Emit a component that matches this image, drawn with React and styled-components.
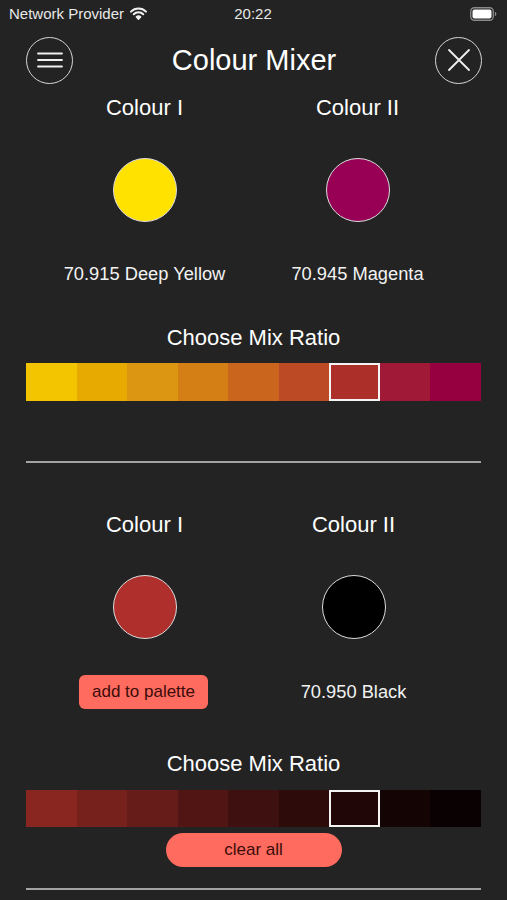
import React from 'react'
import styled, { createGlobalStyle } from 'styled-components'

const GlobalStyle = createGlobalStyle`
  html, body {
    margin: 0;
    padding: 0;
    background: #232323;
  }
  body {
    font-family: "Liberation Sans", Arial, sans-serif;
    color: #ffffff;
  }
`

const Page = styled.div`
  width: 507px;
  min-height: 900px;
  background: #232323;
  display: flex;
  flex-direction: column;
  overflow: hidden;
`

const StatusBar = styled.div`
  height: 28px;
  display: grid;
  grid-template-columns: 1fr auto 1fr;
  align-items: center;
  padding: 0 10px 0 9px;
  font-size: 15px;
  color: #e8e8e8;
`

const Carrier = styled.div`
  display: flex;
  align-items: center;
  gap: 6px;
  margin-top: -1px;
`

const Clock = styled.div`
  font-size: 15px;
  margin-top: -1px;
`

const Battery = styled.div`
  justify-self: end;
  display: flex;
  align-items: center;
`

const Header = styled.div`
  height: 64px;
  display: flex;
  align-items: center;
  justify-content: space-between;
  padding: 0 25px 0 26px;
`

const RoundButton = styled.button`
  width: 47px;
  height: 47px;
  border-radius: 50%;
  border: 1.5px solid #d6d6d6;
  background: transparent;
  display: flex;
  align-items: center;
  justify-content: center;
  padding: 0;
  &:hover {
    cursor: pointer;
  }
`

const Title = styled.h1`
  margin: 0;
  font-size: 29px;
  font-weight: 400;
  color: #ffffff;
`

const Columns = styled.div`
  display: grid;
  grid-template-columns: 213px ${p => p.$second}px;
  padding-left: 38px;
  margin-top: ${p => p.$top}px;
`

const Cell = styled.div`
  display: flex;
  justify-content: center;
  align-items: center;
  margin-top: ${p => p.$top || 0}px;
  height: ${p => p.$h}px;
`

const ColourLabel = styled.div`
  font-size: 22px;
  line-height: 32px;
`

const Swatch = styled.div`
  width: 64px;
  height: 64px;
  border-radius: 50%;
  box-sizing: border-box;
  border: 1.5px solid #dcdcdc;
  background: ${p => p.$colour};
`

const ColourName = styled.div`
  font-size: 18.3px;
  color: #f2f2f2;
`

const PaletteButton = styled.button`
  height: 34px;
  width: 129px;
  border: none;
  border-radius: 6px;
  background: #ff6b5f;
  color: #3b0c09;
  font-family: "Liberation Sans", Arial, sans-serif;
  font-size: 17px;
  padding: 0;
  margin-left: -2px;
`

const MixTitle = styled.div`
  text-align: center;
  font-size: 22px;
  line-height: 26px;
  margin-top: ${p => p.$top}px;
`

const RatioBar = styled.div`
  display: grid;
  grid-template-columns: repeat(9, 1fr);
  margin: ${p => p.$top}px 26px 0 26px;
  height: ${p => p.$h}px;
`

const RatioCell = styled.div`
  background: ${p => p.$colour};
  box-sizing: border-box;
  border: ${p => (p.$selected ? '2px solid #f4f4f4' : 'none')};
`

const Divider = styled.div`
  height: 2px;
  background: #a3a3a3;
  margin: ${p => p.$top}px 26px 0 26px;
`

const ClearButton = styled.button`
  align-self: center;
  width: 176px;
  height: 34px;
  margin-top: 6px;
  border: none;
  border-radius: 17px;
  background: #ff6b5f;
  color: #3b0c09;
  font-family: "Liberation Sans", Arial, sans-serif;
  font-size: 17px;
  padding: 0;
`

const WifiIcon = () => (
  <svg width="17" height="13" viewBox="0 0 17 13">
    <path d="M1 4.6 A10.5 10.5 0 0 1 16 4.6" stroke="#f0f0f0" strokeWidth="2" fill="none" strokeLinecap="round" />
    <path d="M3.7 7.3 A6.6 6.6 0 0 1 13.3 7.3" stroke="#f0f0f0" strokeWidth="2" fill="none" strokeLinecap="round" />
    <path d="M6.3 9.9 A3 3 0 0 1 10.7 9.9 L8.5 12.3 Z" fill="#f0f0f0" stroke="#f0f0f0" strokeWidth="1.4" strokeLinejoin="round" />
  </svg>
)

const BatteryIcon = () => (
  <svg width="27" height="14" viewBox="0 0 27 14">
    <rect x="0.75" y="0.75" width="22.5" height="12.5" rx="3.5" fill="none" stroke="#8a8a8a" strokeWidth="1.3" />
    <rect x="2.5" y="2.5" width="19" height="9" rx="2" fill="#ffffff" />
    <path d="M24.8 4.8 Q26.4 5.2 26.4 7 Q26.4 8.8 24.8 9.2 Z" fill="#8a8a8a" />
  </svg>
)

const MenuIcon = () => (
  <svg width="26" height="18" viewBox="0 0 26 18">
    <path d="M1 2.5H25M1 9H25M1 15.5H25" stroke="#f0f0f0" strokeWidth="1.8" strokeLinecap="round" />
  </svg>
)

const CloseIcon = () => (
  <svg width="24" height="24" viewBox="0 0 24 24">
    <path d="M2 2L22 22M22 2L2 22" stroke="#f0f0f0" strokeWidth="1.8" strokeLinecap="round" />
  </svg>
)

const ratiosA = ['#f2c500', '#e6aa00', '#dd9611', '#d47f15', '#c9651c', '#bc4b25', '#ad2f2a', '#a01a37', '#960041']
const ratiosB = ['#88261f', '#76211c', '#661c19', '#511614', '#3e100f', '#2d0b0a', '#200606', '#150404', '#0a0202']

function Ratio(props) {
  return (
    <RatioBar $top={props.top} $h={props.h}>
      {props.colours.map((c, i) => (
        <RatioCell key={i} $colour={c} $selected={i === props.selected} />
      ))}
    </RatioBar>
  )
}

export default function App() {
  return (
    <Page>
      <GlobalStyle />
      <StatusBar>
        <Carrier>
          Network Provider
          <WifiIcon />
        </Carrier>
        <Clock>20:22</Clock>
        <Battery>
          <BatteryIcon />
        </Battery>
      </StatusBar>

      <Header>
        <RoundButton><MenuIcon /></RoundButton>
        <Title>Colour Mixer</Title>
        <RoundButton><CloseIcon /></RoundButton>
      </Header>

      <Columns $top={0} $second={213}>
        <Cell $h={32}><ColourLabel>Colour I</ColourLabel></Cell>
        <Cell $h={32}><ColourLabel>Colour II</ColourLabel></Cell>
        <Cell $h={64} $top={34}><Swatch $colour="#ffe200" /></Cell>
        <Cell $h={64} $top={34}><Swatch $colour="#970055" /></Cell>
        <Cell $h={24} $top={40}><ColourName>70.915 Deep Yellow</ColourName></Cell>
        <Cell $h={24} $top={40}><ColourName>70.945 Magenta</ColourName></Cell>
      </Columns>
      <MixTitle $top={39}>Choose Mix Ratio</MixTitle>
      <Ratio top={12} h={38} colours={ratiosA} selected={6} />
      <Divider $top={60} />

      <Columns $top={46} $second={205}>
        <Cell $h={32}><ColourLabel>Colour I</ColourLabel></Cell>
        <Cell $h={32}><ColourLabel>Colour II</ColourLabel></Cell>
        <Cell $h={64} $top={34}><Swatch $colour="#ae2f2b" /></Cell>
        <Cell $h={64} $top={34}><Swatch $colour="#000000" /></Cell>
        <Cell $h={34} $top={36}><PaletteButton>add to palette</PaletteButton></Cell>
        <Cell $h={34} $top={36}><ColourName>70.950 Black</ColourName></Cell>
      </Columns>
      <MixTitle $top={42}>Choose Mix Ratio</MixTitle>
      <Ratio top={13} h={37} colours={ratiosB} selected={6} />
      <ClearButton>clear all</ClearButton>
      <Divider $top={21} />
    </Page>
  )
}
